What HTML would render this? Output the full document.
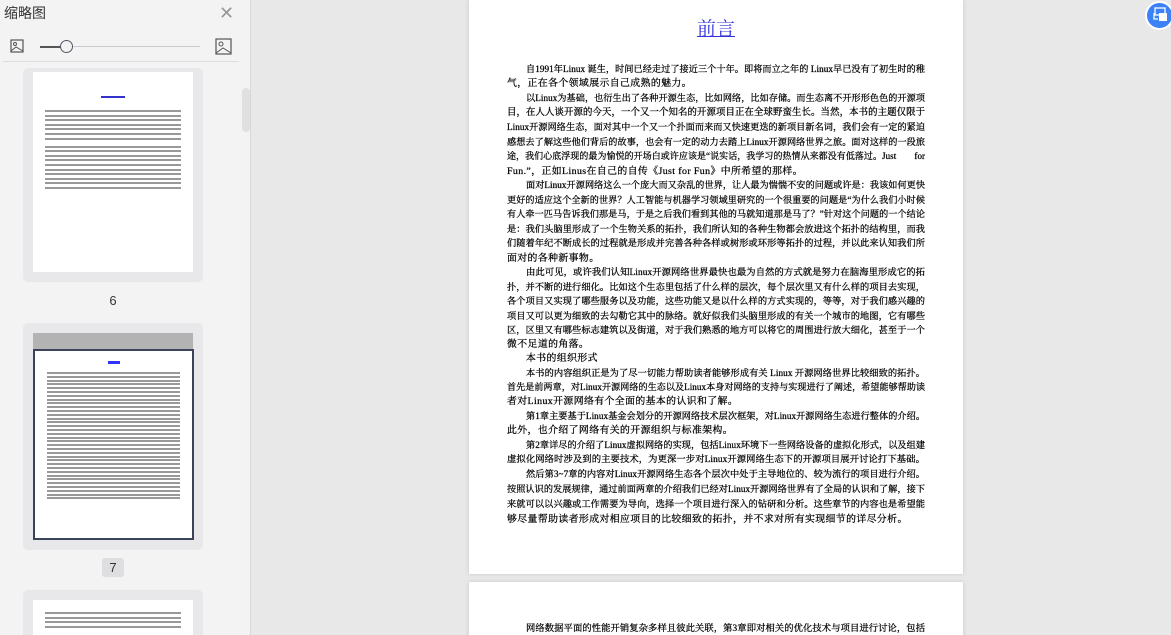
<!DOCTYPE html>
<html style="width:1171px;height:635px;overflow:hidden;background:#e8e8e8"><head><meta charset="utf-8"><style>
*{margin:0;padding:0;box-sizing:border-box}
body{width:1171px;height:635px;overflow:hidden;background:#e8e8e8;font-family:"Liberation Serif","Noto Serif CJK SC",serif;position:relative}
#side{position:absolute;left:0;top:0;width:251px;height:635px;background:#f3f3f3;border-right:1px solid #d8d8d8}
.t{position:absolute;left:4px;top:3px;font:14px "Liberation Sans","Noto Sans CJK SC",sans-serif;color:#333}
.x{position:absolute;left:219px;top:3px;font:18px "Liberation Sans",sans-serif;color:#999}
.hr{position:absolute;left:3px;top:61px;width:236px;height:1px;background:#ddd}
.sb{position:absolute;left:242px;top:88px;width:8px;height:44px;border-radius:4px;background:#e0e0e0}
.card{position:absolute;left:23px;width:180px;background:#e8e8ea;border-radius:5px}
.pg{position:absolute;background:#fff}
.ln{height:2px;background:#555;margin:0 0 2.6px 0;opacity:.6}
.num{position:absolute;font:13px "Liberation Sans",sans-serif;color:#333;text-align:center}
#p1{position:absolute;left:469px;top:0;width:494px;height:574px;background:#fff;box-shadow:0 0 4px rgba(0,0,0,.15);overflow:hidden}
#p2{position:absolute;left:469px;top:582px;width:494px;height:60px;background:#fff;box-shadow:0 0 4px rgba(0,0,0,.15);overflow:hidden}
h1{position:absolute;left:0;width:494px;top:14px;text-align:center;font-weight:normal;font-size:19px;color:#3333dd;text-decoration:underline}
.L{position:absolute;left:38px;width:418px;font-size:9.9px;line-height:15px;height:15px;color:#000;white-space:nowrap;-webkit-text-stroke:0.25px #000}
.L span{display:inline-block;white-space:nowrap}
.L.i{left:57px;width:399px}
</style></head><body>
<div id="side">
<div class="t">缩略图</div>
<div class="x">✕</div>
<svg style="position:absolute;left:10px;top:39px" width="14" height="14"><rect x="1" y="1" width="12" height="12" fill="none" stroke="#555" stroke-width="1.2"/><circle cx="5" cy="5" r="1.5" fill="none" stroke="#555"/><path d="M1 12 L6 8 L13 12" fill="none" stroke="#555"/></svg>
<div style="position:absolute;left:40px;top:46px;width:26px;height:1.5px;background:#555"></div>
<div style="position:absolute;left:66px;top:46px;width:134px;height:1px;background:#ccc"></div>
<div style="position:absolute;left:60px;top:40px;width:13px;height:13px;border-radius:50%;border:1.5px solid #556;background:#f3f3f3"></div>
<svg style="position:absolute;left:215px;top:38px" width="17" height="17"><rect x="1" y="1" width="15" height="15" fill="none" stroke="#555" stroke-width="1.2"/><circle cx="6" cy="6" r="2" fill="none" stroke="#555"/><path d="M1 15 L8 10 L16 15" fill="none" stroke="#555"/></svg>
<div class="hr"></div>
<div class="sb"></div>
<div class="card" style="top:68px;height:214px"><div class="pg" style="left:10px;top:4px;width:160px;height:200px;padding:24px 12px">
<div style="width:24px;height:2px;background:#33c;margin:0 auto 12px"></div>
<div class="ln"></div><div class="ln"></div><div class="ln"></div><div class="ln"></div><div class="ln"></div><div class="ln"></div><div class="ln"></div><div class="ln" style="margin-top:6px"></div><div class="ln"></div><div class="ln"></div><div class="ln"></div><div class="ln"></div><div class="ln"></div><div class="ln"></div><div class="ln"></div><div class="ln"></div><div class="ln"></div></div></div>
<div class="num" style="left:103px;top:293px;width:20px">6</div>
<div class="card" style="top:323px;height:227px"><div style="position:absolute;left:10px;top:10px;width:160px;height:17px;background:#b3b3b3"></div>
<div class="pg" style="left:10px;top:26px;width:161px;height:191px;border:2px solid #3a4358;padding:10px 12px">
<div style="width:12px;height:3px;background:#33f;margin:0 auto 8px"></div>
<div class="ln" style="margin-bottom:1.8px"></div><div class="ln" style="margin-bottom:1.8px"></div><div class="ln" style="margin-bottom:1.8px"></div><div class="ln" style="margin-bottom:1.8px"></div><div class="ln" style="margin-bottom:1.8px"></div><div class="ln" style="margin-bottom:1.8px"></div><div class="ln" style="margin-bottom:1.8px"></div><div class="ln" style="margin-bottom:1.8px"></div><div class="ln" style="margin-bottom:1.8px"></div><div class="ln" style="margin-bottom:1.8px"></div><div class="ln" style="margin-bottom:1.8px"></div><div class="ln" style="margin-bottom:1.8px"></div><div class="ln" style="margin-bottom:1.8px"></div><div class="ln" style="margin-bottom:1.8px"></div><div class="ln" style="margin-bottom:1.8px"></div><div class="ln" style="margin-bottom:1.8px"></div><div class="ln" style="margin-bottom:1.8px"></div><div class="ln" style="margin-bottom:1.8px"></div><div class="ln" style="margin-bottom:1.8px"></div><div class="ln" style="margin-bottom:1.8px"></div><div class="ln" style="margin-bottom:1.8px"></div><div class="ln" style="margin-bottom:1.8px"></div><div class="ln" style="margin-bottom:1.8px"></div><div class="ln" style="margin-bottom:1.8px"></div><div class="ln" style="margin-bottom:1.8px"></div><div class="ln" style="margin-bottom:1.8px"></div><div class="ln" style="margin-bottom:1.8px"></div><div class="ln" style="margin-bottom:1.8px"></div><div class="ln" style="margin-bottom:1.8px"></div><div class="ln" style="margin-bottom:1.8px"></div><div class="ln" style="margin-bottom:1.8px"></div><div class="ln" style="margin-bottom:1.8px"></div><div class="ln" style="margin-bottom:1.8px"></div><div class="ln" style="margin-bottom:1.8px"></div></div></div>
<div class="num" style="left:102px;top:558px;width:22px;height:19px;line-height:19px;background:#dedee0;border-radius:3px">7</div>
<div class="card" style="top:590px;height:60px"><div class="pg" style="left:10px;top:10px;width:160px;height:60px;padding:12px 12px"><div class="ln"></div><div class="ln"></div><div class="ln"></div><div class="ln"></div></div></div>
</div>
<div id="p1">
<h1>前言</h1>
<div class="L i" style="top:62px"><span>自1991年Linux 诞生，时间已经走过了接近三个十年。即将而立之年的 Linux早已没有了初生时的稚</span></div>
<div class="L e" style="top:76px"><span>气，正在各个领域展示自己成熟的魅力。</span></div>
<div class="L i" style="top:91px"><span>以Linux为基础，也衍生出了各种开源生态，比如网络，比如存储。而生态离不开形形色色的开源项</span></div>
<div class="L" style="top:105px"><span>目，在人人谈开源的今天，一个又一个知名的开源项目正在全球野蛮生长。当然，本书的主题仅限于</span></div>
<div class="L" style="top:120px"><span>Linux开源网络生态，面对其中一个又一个扑面而来而又快速更迭的新项目新名词，我们会有一定的紧迫</span></div>
<div class="L" style="top:135px"><span>感想去了解这些他们背后的故事，也会有一定的动力去踏上Linux开源网络世界之旅。面对这样的一段旅</span></div>
<div class="L" style="top:149px"><span>途，我们心底浮现的最为愉悦的开场白或许应该是“说实话，我学习的热情从来都没有低落过。Just　　for</span></div>
<div class="L e" style="top:164px"><span>Fun.”，正如Linus在自己的自传《Just for Fun》中所希望的那样。</span></div>
<div class="L i" style="top:178px"><span>面对Linux开源网络这么一个庞大而又杂乱的世界，让人最为惴惴不安的问题或许是：我该如何更快</span></div>
<div class="L" style="top:193px"><span>更好的适应这个全新的世界？人工智能与机器学习领域里研究的一个很重要的问题是“为什么我们小时候</span></div>
<div class="L" style="top:207px"><span>有人牵一匹马告诉我们那是马，于是之后我们看到其他的马就知道那是马了？”针对这个问题的一个结论</span></div>
<div class="L" style="top:222px"><span>是：我们头脑里形成了一个生物关系的拓扑，我们所认知的各种生物都会放进这个拓扑的结构里，而我</span></div>
<div class="L" style="top:236px"><span>们随着年纪不断成长的过程就是形成并完善各种各样或树形或环形等拓扑的过程，并以此来认知我们所</span></div>
<div class="L e" style="top:251px"><span>面对的各种新事物。</span></div>
<div class="L i" style="top:265px"><span>由此可见，或许我们认知Linux开源网络世界最快也最为自然的方式就是努力在脑海里形成它的拓</span></div>
<div class="L" style="top:280px"><span>扑，并不断的进行细化。比如这个生态里包括了什么样的层次，每个层次里又有什么样的项目去实现，</span></div>
<div class="L" style="top:294px"><span>各个项目又实现了哪些服务以及功能，这些功能又是以什么样的方式实现的，等等，对于我们感兴趣的</span></div>
<div class="L" style="top:309px"><span>项目又可以更为细致的去勾勒它其中的脉络。就好似我们头脑里形成的有关一个城市的地图，它有哪些</span></div>
<div class="L" style="top:323px"><span>区，区里又有哪些标志建筑以及街道，对于我们熟悉的地方可以将它的周围进行放大细化，甚至于一个</span></div>
<div class="L e" style="top:337px"><span>微不足道的角落。</span></div>
<div class="L i e" style="top:351px"><span>本书的组织形式</span></div>
<div class="L i" style="top:366px"><span>本书的内容组织正是为了尽一切能力帮助读者能够形成有关 Linux 开源网络世界比较细致的拓扑。</span></div>
<div class="L" style="top:380px"><span>首先是前两章，对Linux开源网络的生态以及Linux本身对网络的支持与实现进行了阐述，希望能够帮助读</span></div>
<div class="L e" style="top:394px"><span>者对Linux开源网络有个全面的基本的认识和了解。</span></div>
<div class="L i" style="top:409px"><span>第1章主要基于Linux基金会划分的开源网络技术层次框架，对Linux开源网络生态进行整体的介绍。</span></div>
<div class="L e" style="top:423px"><span>此外，也介绍了网络有关的开源组织与标准架构。</span></div>
<div class="L i" style="top:438px"><span>第2章详尽的介绍了Linux虚拟网络的实现，包括Linux环境下一些网络设备的虚拟化形式，以及组建</span></div>
<div class="L e" style="top:452px"><span>虚拟化网络时涉及到的主要技术，为更深一步对Linux开源网络生态下的开源项目展开讨论打下基础。</span></div>
<div class="L i" style="top:467px"><span>然后第3~7章的内容对Linux开源网络生态各个层次中处于主导地位的、较为流行的项目进行介绍。</span></div>
<div class="L" style="top:482px"><span>按照认识的发展规律，通过前面两章的介绍我们已经对Linux开源网络世界有了全局的认识和了解，接下</span></div>
<div class="L" style="top:497px"><span>来就可以以兴趣或工作需要为导向，选择一个项目进行深入的钻研和分析。这些章节的内容也是希望能</span></div>
<div class="L e" style="top:512px"><span>够尽量帮助读者形成对相应项目的比较细致的拓扑，并不求对所有实现细节的详尽分析。</span></div>
</div>
<div id="p2"><div class="L i" style="top:39px"><span>网络数据平面的性能开销复杂多样且彼此关联，第3章即对相关的优化技术与项目进行讨论，包括</span></div></div>
<div style="position:absolute;left:1145px;top:1px;width:29px;height:29px;border-radius:50%;background:#3b82f6;border:2px solid #fff"></div>
<svg style="position:absolute;left:1152px;top:7px" width="16" height="16"><rect x="3" y="1" width="10" height="7" fill="none" stroke="#fff" stroke-width="1.3"/><rect x="7" y="6" width="8" height="8" fill="#fff"/><path d="M2 6 V12 H6" fill="none" stroke="#fff" stroke-width="1.3"/></svg>
<script>
document.querySelectorAll('.L').forEach(function(d){
  var s=d.querySelector('span');var target=d.clientWidth;
  var isEnd=d.classList.contains('e');
  var n=s.textContent.length;
  var nat=s.getBoundingClientRect().width;
  if(nat>target){var fs=9.9*target/nat*0.99; s.style.fontSize=fs+'px'; nat=s.getBoundingClientRect().width;}
  if(isEnd){ if(nat>target) s.style.letterSpacing=((target-nat)/n)+'px'; else s.style.letterSpacing=Math.min(0.4,(target-nat)/n)+'px'; }
  else { s.style.letterSpacing=((target-nat)/(n-1))+'px'; }
});
</script>
</body></html>
